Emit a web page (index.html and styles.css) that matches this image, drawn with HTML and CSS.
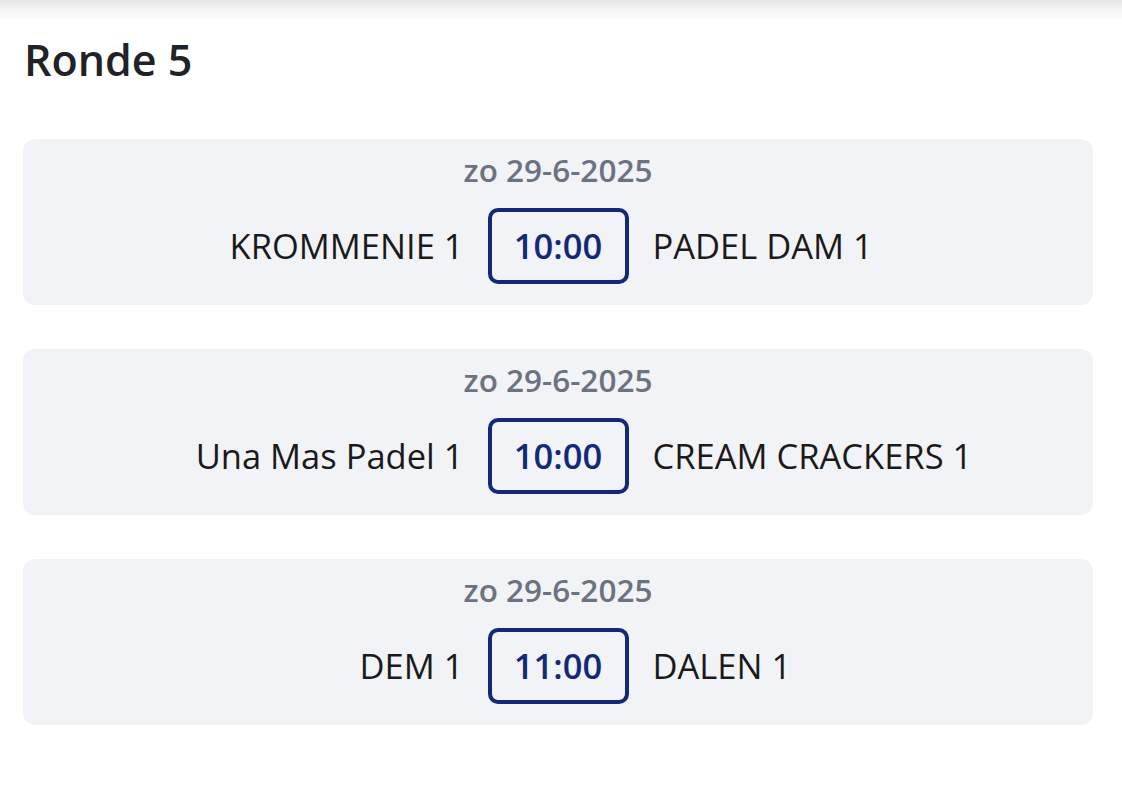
FILE: index.html
```html
<!DOCTYPE html>
<html lang="nl">
<head>
<meta charset="utf-8">
<title>Ronde 5</title>
<link rel="stylesheet" href="styles.css">
</head>
<body>
<div class="top-shadow"></div>
<main class="page">
  <h1 class="round-title">Ronde 5</h1>
  <section class="matches">
    <article class="match">
      <div class="match-date">zo 29-6-2025</div>
      <div class="match-row">
        <span class="team team-home">KROMMENIE 1</span>
        <span class="match-time">10:00</span>
        <span class="team team-away">PADEL DAM 1</span>
      </div>
    </article>
    <article class="match">
      <div class="match-date">zo 29-6-2025</div>
      <div class="match-row">
        <span class="team team-home">Una Mas Padel 1</span>
        <span class="match-time">10:00</span>
        <span class="team team-away">CREAM CRACKERS 1</span>
      </div>
    </article>
    <article class="match">
      <div class="match-date">zo 29-6-2025</div>
      <div class="match-row">
        <span class="team team-home">DEM 1</span>
        <span class="match-time">11:00</span>
        <span class="team team-away">DALEN 1</span>
      </div>
    </article>
  </section>
</main>
</body>
</html>
```

FILE: styles.css
```css
* { box-sizing: border-box; }
html, body {
  margin: 0;
  padding: 0;
  background: #ffffff;
  font-family: "Open Sans", "Noto Sans", sans-serif;
  color: #1f2328;
}
.top-shadow {
  height: 22px;
  background: linear-gradient(to bottom, #e6e6e6 0%, #f5f5f5 50%, #ffffff 100%);
}
.page {
  padding: 0 29px 0 23px;
}
.round-title {
  margin: 10px 0 0 1px;
  font-size: 43px;
  font-weight: 600;
  line-height: 56px;
  color: #1f2328;
}
.matches {
  margin-top: 51px;
  display: flex;
  flex-direction: column;
  gap: 44px;
}
.match {
  background: #f2f3f7;
  border-radius: 12px;
  padding: 10px 16px 21px;
  display: flex;
  flex-direction: column;
  align-items: center;
}
.match-date {
  font-size: 31.5px;
  font-weight: 600;
  line-height: 42px;
  color: #6b7280;
}
.match-row {
  margin-top: 17px;
  width: 100%;
  display: grid;
  grid-template-columns: 1fr auto 1fr;
  align-items: center;
  column-gap: 24px;
}
.team {
  font-size: 34.5px;
  line-height: 48px;
  color: #1a1a1a;
}
.team-home { text-align: right; }
.team-away { text-align: left; }
.match-time {
  display: block;
  width: 141px;
  text-align: center;
  border: 4px solid #14287a;
  border-radius: 10px;
  padding: 10px 0;
  font-size: 34.5px;
  line-height: 48px;
  font-weight: 600;
  color: #14287a;
}
```
